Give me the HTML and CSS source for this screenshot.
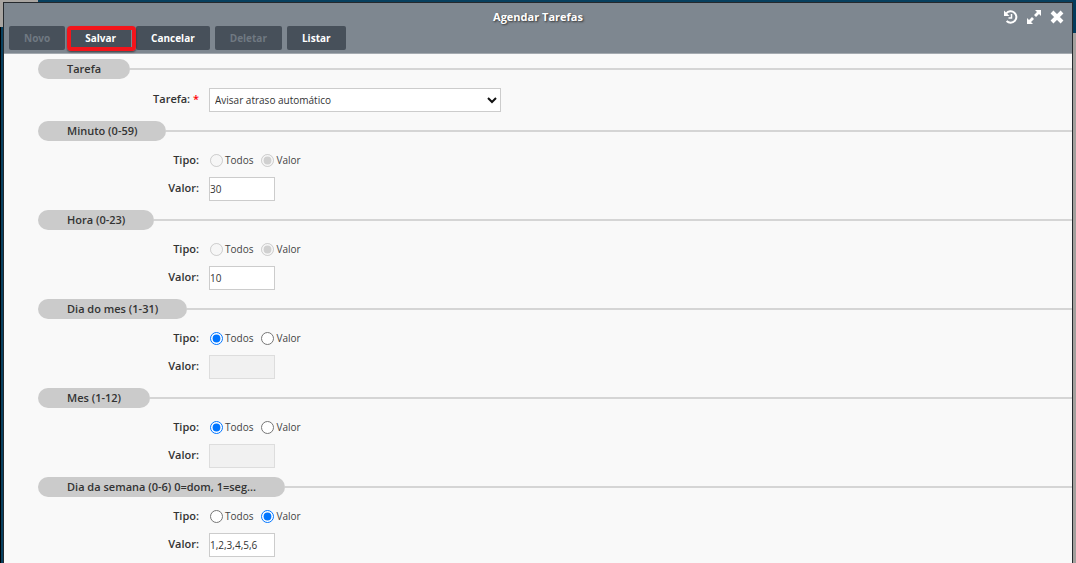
FILE: index.html
```html
<!DOCTYPE html>
<html lang="pt-BR">
<head>
<meta charset="utf-8">
<title>Agendar Tarefas</title>
<link rel="stylesheet" href="styles.css">
</head>
<body>
<div class="backdrop">
  <div class="dialog">
    <header class="header">
      <div class="titlebar">
        <h1 class="title">Agendar Tarefas</h1>
        <div class="tools">
          <button class="tool" aria-label="Histórico"><svg width="16" height="16" viewBox="0 0 16 16" fill="none" stroke="#fff" stroke-width="2"><path d="M3.2 4.5A5.7 5.7 0 1 1 3.6 12"/><path d="M1 1.5V7h5.5z" fill="#fff" stroke="none"/><path d="M8.5 5v4H5.5" stroke-width="1.5"/></svg></button>
          <button class="tool" aria-label="Expandir"><svg width="16" height="16" viewBox="0 0 16 16" fill="#fff"><path d="M9 1h6v6l-2-2-3 3-2-2 3-3zM1 9l2 2 3-3 2 2-3 3 2 2H1z"/></svg></button>
          <button class="tool" aria-label="Fechar"><svg width="16" height="16" viewBox="0 0 16 16" stroke="#fff" stroke-width="4"><path d="M3 3l10 10M13 3L3 13"/></svg></button>
        </div>
      </div>
      <div class="toolbar">
        <button class="btn" disabled>Novo</button>
        <button class="btn highlighted">Salvar</button>
        <button class="btn">Cancelar</button>
        <button class="btn" disabled>Deletar</button>
        <button class="btn">Listar</button>
      </div>
    </header>
    <form class="form">
      <section class="section">
        <h2 class="legend"><span class="pill">Tarefa</span></h2>
        <div class="row"><label class="label" for="tarefa">Tarefa: <span class="required">*</span></label>
          <div class="select-wrap"><select class="select" id="tarefa"><option>Avisar atraso automático</option></select><svg class="chevron" width="10" height="7" viewBox="0 0 10 7" fill="none" stroke="#111" stroke-width="2"><path d="M1 1l4 4 4-4"/></svg></div></div>
      </section>
      <section class="section">
        <h2 class="legend"><span class="pill">Minuto (0-59)</span></h2>
        <div class="row options"><span class="label">Tipo:</span><label class="choice"><input type="radio" name="minuto" disabled>Todos</label><label class="choice"><input type="radio" name="minuto" checked disabled>Valor</label></div>
        <div class="row"><label class="label" for="v-minuto">Valor:</label><input class="text" id="v-minuto" type="text" value="30"></div>
      </section>
      <section class="section">
        <h2 class="legend"><span class="pill">Hora (0-23)</span></h2>
        <div class="row options"><span class="label">Tipo:</span><label class="choice"><input type="radio" name="hora" disabled>Todos</label><label class="choice"><input type="radio" name="hora" checked disabled>Valor</label></div>
        <div class="row"><label class="label" for="v-hora">Valor:</label><input class="text" id="v-hora" type="text" value="10"></div>
      </section>
      <section class="section">
        <h2 class="legend"><span class="pill">Dia do mes (1-31)</span></h2>
        <div class="row options"><span class="label">Tipo:</span><label class="choice"><input type="radio" name="dia" checked>Todos</label><label class="choice"><input type="radio" name="dia">Valor</label></div>
        <div class="row"><label class="label" for="v-dia">Valor:</label><input class="text" id="v-dia" type="text" disabled></div>
      </section>
      <section class="section">
        <h2 class="legend"><span class="pill">Mes (1-12)</span></h2>
        <div class="row options"><span class="label">Tipo:</span><label class="choice"><input type="radio" name="mes" checked>Todos</label><label class="choice"><input type="radio" name="mes">Valor</label></div>
        <div class="row"><label class="label" for="v-mes">Valor:</label><input class="text" id="v-mes" type="text" disabled></div>
      </section>
      <section class="section">
        <h2 class="legend"><span class="pill">Dia da semana (0-6) 0=dom, 1=seg...</span></h2>
        <div class="row options"><span class="label">Tipo:</span><label class="choice"><input type="radio" name="semana">Todos</label><label class="choice"><input type="radio" name="semana" checked>Valor</label></div>
        <div class="row"><label class="label" for="v-semana">Valor:</label><input class="text" id="v-semana" type="text" value="1,2,3,4,5,6"></div>
      </section>
    </form>
  </div>
</div>
</body>
</html>
```
FILE: styles.css
```css
* { box-sizing: border-box; }
body {
  margin: 0;
  font: 11px/16px "Open Sans", "Noto Sans", sans-serif;
  color: #333;
}
button, input, select { font: inherit; }
.backdrop {
  height: 100vh;
  overflow: hidden;
  padding: 2px 3px 0;
  background:
    linear-gradient(#a9a5a1, #a9a5a1) left top / 38px 27px no-repeat,
    linear-gradient(#033c5c 33px, #a3a09d 33px) right top / 3px 100% no-repeat,
    linear-gradient(90deg, #000 1px, #07405f 1px);
}
.dialog {
  min-height: 100%;
  border: 1px solid #25292d;
  border-bottom: 0;
  background: #f9f9f9;
}
.header {
  background: #7e8790;
  border-bottom: 1px solid #a4aab0;
  padding-bottom: 3px;
}
.titlebar {
  display: grid;
  grid-template-columns: 1fr auto 1fr;
  align-items: center;
  height: 23px;
  padding: 5px 7px 0;
}
.title {
  grid-column: 2;
  margin: 0;
  font-size: 11px;
  line-height: 16px;
  font-weight: 700;
  color: #fff;
  text-shadow: 1px 1px 2px #333;
}
.tools { display: flex; gap: 7px; justify-content: flex-end; }
.tool { display: block; border: 0; padding: 0; background: none; height: 16px; }
.tool svg { display: block; }
.toolbar { display: flex; gap: 5px; padding: 0 5px; }
.btn {
  position: relative;
  height: 24px;
  padding: 0 15px;
  border: 0;
  border-radius: 2px;
  background: #47505a;
  color: #fff;
  font-size: 10px;
  font-weight: 700;
}
.btn:disabled { color: #707982; }
.highlighted::after {
  content: "";
  position: absolute;
  z-index: 1;
  inset: 0 -5px -1px -3px;
  border: 4px solid #f3151b;
  border-radius: 4px;
  box-shadow: 0 1px 2px #0008;
}
.form { padding: 5px 0 0 34px; }
.section { padding-bottom: 9px; }
.legend {
  display: flex;
  align-items: center;
  margin: 0 0 9px;
  font-size: 11px;
  line-height: 20px;
  font-weight: 600;
}
.legend::after { content: ""; flex: 1; height: 2px; background: #d5d5d5; }
.pill { padding: 0 29px; border-radius: 10px; background: #cbcbcb; }
.row { display: flex; height: 24px; gap: 10px; }
.options { height: 20px; margin-bottom: 7px; align-items: center; }
.label { width: 161px; text-align: right; font-weight: 600; line-height: 22px; }
.required { color: #f00; }
.select-wrap { position: relative; width: 292px; }
.select, .text { height: 24px; border: 1px solid #ccc; border-radius: 0; background: #fff; color: #333; font-size: 10px; }
.select { width: 100%; padding: 0 5px; appearance: none; }
.chevron { position: absolute; right: 4px; top: 9px; }
.text { width: 66px; padding: 0; }
.text:disabled { background: #f1f1f1; border-color: #ddd; }
.choice { display: flex; align-items: center; gap: 2px; color: #444; font-size: 10px; }
.choice input { margin: 0 0 0 1px; width: 13px; height: 13px; }
.choice + .choice { margin-left: -3px; }
```
